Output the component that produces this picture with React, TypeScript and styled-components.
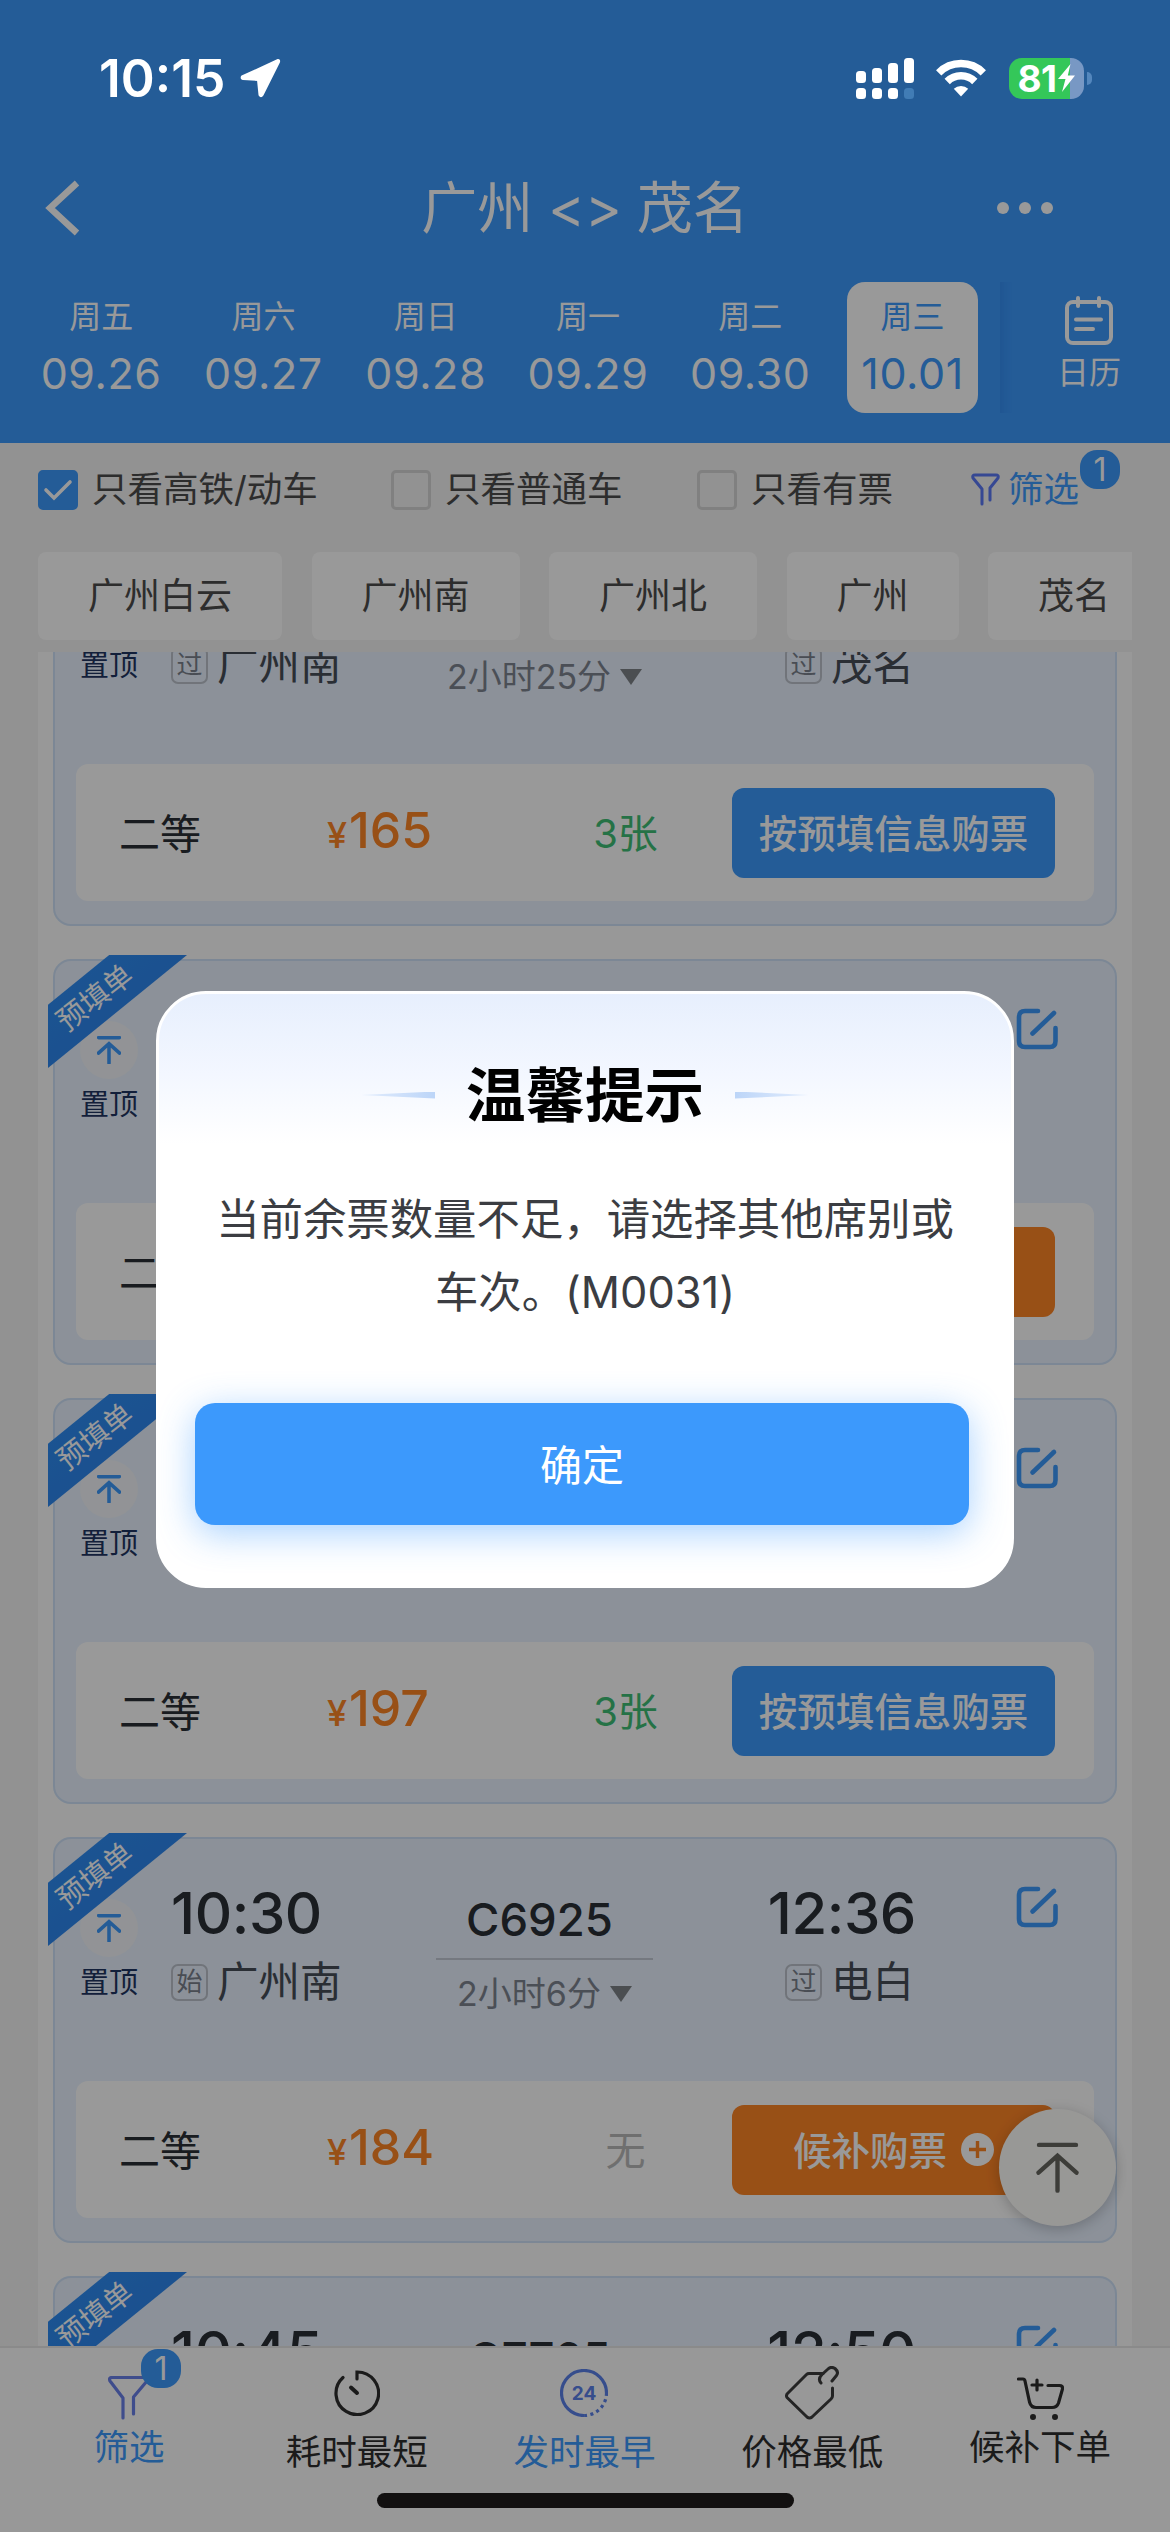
import React from "react";
import styled, { createGlobalStyle, css } from "styled-components";

const GlobalStyle = createGlobalStyle`
  *, *::before, *::after { box-sizing: border-box; }
  body {
    margin: 0;
    font-family: Inter, "Noto Sans CJK SC", sans-serif;
    color: #2b2f36;
  }
`;

const BLUE = "#3c99fc";
const ORANGE = "#fe8526";

const Screen = styled.div`
  position: relative;
  width: 1170px;
  height: 2532px;
  overflow: hidden;
  display: flex;
  flex-direction: column;
  background: #f3f3f3;
  white-space: nowrap;
`;

/* ---------- header ---------- */

const Header = styled.header`
  height: 443px;
  background: ${BLUE};
  color: #fff;
  display: flex;
  flex-direction: column;
  flex: none;
`;

const StatusBar = styled.div`
  position: relative;
  z-index: 20;
  height: 156px;
  flex: none;
  display: flex;
  justify-content: space-between;
  align-items: center;
  padding: 0 78px 0 99px;
  color: #fff;
`;

const StatusGroup = styled.div<{ $gap: number }>`
  display: flex;
  align-items: center;
  gap: ${(p) => p.$gap}px;
`;

const Clock = styled.span`
  font-size: 51.5px;
  font-weight: 600;
  line-height: 60px;
`;

const Battery = styled.div`
  display: flex;
  align-items: center;
  gap: 3px;
  margin-left: 23px;
`;

const BatteryBody = styled.div`
  width: 75px;
  height: 41px;
  border-radius: 13px;
  display: flex;
  align-items: center;
  justify-content: center;
  background: linear-gradient(90deg, #34c759 0 61px, #7898c4 61px);
  font-size: 37px;
  font-weight: 700;
  letter-spacing: -0.5px;
`;

const BatteryCap = styled.div`
  width: 5px;
  height: 13px;
  border-radius: 0 6px 6px 0;
  background: #5487bd;
`;

const TitleBar = styled.div`
  height: 104px;
  display: grid;
  grid-template-columns: 173px 1fr 173px;
  align-items: center;
`;

const BackSlot = styled.div`
  padding-left: 44px;
  display: flex;
`;

const Title = styled.h1`
  margin: 0;
  font-size: 56px;
  font-weight: 400;
  line-height: 80px;
  text-align: center;
  word-spacing: -1px;
`;

const MenuDots = styled.div`
  display: flex;
  gap: 10px;
`;

const Dot = styled.i`
  width: 12px;
  height: 12px;
  border-radius: 50%;
  background: #fff;
`;

const DateStrip = styled.div`
  display: flex;
  padding: 22px 0 0 20px;
`;

const DateCell = styled.div<{ $active?: boolean }>`
  width: 131px;
  height: 131px;
  margin: 0 ${31.3 / 2}px;
  border-radius: 18px;
  display: flex;
  flex-direction: column;
  align-items: center;
  padding-top: 15px;
  ${(p) =>
    p.$active &&
    css`
      background: #fff;
      color: ${BLUE};
    `}
`;

const DateList = styled.div`
  display: flex;
  flex: none;
  width: 980px;
`;

const Weekday = styled.span`
  font-size: 32px;
  line-height: 40px;
`;

const DayNumber = styled.span`
  font-size: 43px;
  line-height: 56px;
  margin-top: 8px;
  letter-spacing: 0.6px;
`;

const CalendarButton = styled.div`
  flex: 1;
  box-shadow: inset 12px 0 10px -9px rgba(0, 60, 180, 0.14);
  display: flex;
  flex-direction: column;
  align-items: center;
  padding: 14px 0 0 8px;
  font-size: 32px;
  line-height: 40px;
  gap: 7px;
`;

/* ---------- filters ---------- */

const FilterRow = styled.div`
  height: 94px;
  flex: none;
  display: flex;
  padding-left: 38px;
  align-items: center;
  font-size: 35.5px;
  line-height: 50px;
  color: #4c4c4c;
`;

const CheckItem = styled.label<{ $width: number }>`
  width: ${(p) => p.$width}px;
  flex: none;
  display: flex;
  align-items: center;
  gap: 14px;
`;

const CheckBox = styled.span<{ $checked?: boolean }>`
  width: 40px;
  height: 40px;
  border-radius: 5px;
  flex: none;
  display: flex;
  align-items: center;
  justify-content: center;
  border: 3px solid ${(p) => (p.$checked ? BLUE : "#d6d6d6")};
  background: ${(p) => (p.$checked ? BLUE : "transparent")};
`;

const FilterLink = styled.div`
  position: relative;
  display: flex;
  align-items: center;
  gap: 8px;
  color: ${BLUE};
`;

const Badge = styled.span<{ $left: number; $top: number }>`
  position: absolute;
  left: ${(p) => p.$left}px;
  top: ${(p) => p.$top}px;
  width: 40px;
  height: 39px;
  border-radius: 17px;
  background: ${BLUE};
  color: #fff;
  font-size: 32px;
  line-height: 39px;
  text-align: center;
`;

const ChipRow = styled.div`
  height: 115px;
  flex: none;
  margin: 0 38px;
  padding-top: 15px;
  display: flex;
  align-items: flex-start;
  gap: 29.5px;
  overflow: hidden;
`;

const Chip = styled.div`
  flex: none;
  height: 88px;
  padding: 0 50px;
  border-radius: 8px;
  background: #fff;
  font-size: 36px;
  line-height: 88px;
  color: #4c4c4c;
`;

/* ---------- list ---------- */

const List = styled.main`
  height: 1694px;
  flex: none;
  margin: 0 38px;
  padding: 0 15px;
  background: #fefefe;
  overflow: hidden;
`;

const Card = styled.article`
  position: relative;
  width: 1064px;
  height: 406px;
  margin-bottom: 33px;
  border: 2px solid #cfe2f8;
  border-radius: 18px;
  background: #e9f2ff;
  padding: 0 21px 0 0;
  &:first-child {
    margin-top: -132px;
  }
`;

const CardTop = styled.div`
  height: 242px;
  display: grid;
  grid-template-columns: 108px 273px 217px 261px 1fr;
`;

const PinColumn = styled.div`
  display: flex;
  flex-direction: column;
  align-items: center;
  padding-top: 60px;
  font-size: 29px;
  line-height: 40px;
  color: #1f3562;
`;

const PinCircle = styled.span`
  width: 58px;
  height: 58px;
  border-radius: 50%;
  background: #f3f6fa;
  display: flex;
  align-items: center;
  justify-content: center;
  margin-bottom: 6px;
`;

const Stop = styled.div<{ $end?: boolean }>`
  display: flex;
  flex-direction: column;
  align-items: ${(p) => (p.$end ? "flex-end" : "flex-start")};
  padding: 39px 0 0 ${(p) => (p.$end ? 0 : 8)}px;
`;

const Time = styled.span`
  font-size: 58px;
  font-weight: 500;
  line-height: 70px;
  letter-spacing: -0.4px;
  margin-right: -2px;
`;

const Station = styled.div`
  margin-top: 12px;
  height: 44px;
  display: flex;
  align-items: center;
  gap: 9px;
  font-size: 41.5px;
  line-height: 44px;
  color: #474d58;
`;

const StopKind = styled.span`
  width: 37px;
  height: 37px;
  border: 2px solid #bcc2cc;
  border-radius: 7px;
  font-size: 26px;
  line-height: 31px;
  text-align: center;
  color: #7a818c;
`;

const Middle = styled.div`
  display: flex;
  flex-direction: column;
  align-items: center;
  padding-top: 54px;
`;

const TrainNo = styled.span`
  font-size: 45.5px;
  font-weight: 450;
  line-height: 54px;
  margin-right: 10px;
`;

const Duration = styled.div`
  align-self: stretch;
  margin-top: 11px;
  border-top: 2px solid #c3cad6;
  padding-top: 12px;
  display: flex;
  align-items: center;
  justify-content: center;
  gap: 9px;
  font-size: 34px;
  line-height: 44px;
  color: #7e848f;
`;

const Caret = styled.i`
  border: 11px solid transparent;
  border-top: 16px solid #7e8388;
  border-bottom: 0;
`;

const EditSlot = styled.div`
  padding: 47px 0 0 102px;
`;

const SeatPanel = styled.div`
  margin-left: 21px;
  height: 137px;
  border-radius: 12px;
  background: #fff;
  display: grid;
  grid-template-columns: 251px 210px 195px 323px;
  align-items: center;
`;

const SeatClass = styled.span`
  padding: 0 0 4px 43px;
  font-size: 41px;
`;

const Price = styled.span`
  display: flex;
  align-items: baseline;
  gap: 2px;
  color: ${ORANGE};
  font-size: 50px;
  font-weight: 500;
  line-height: 60px;
  small {
    font-size: 36px;
  }
`;

const Remain = styled.span<{ $none?: boolean }>`
  font-size: 40px;
  text-align: center;
  margin-left: -18px;
  padding-bottom: 3px;
  color: ${(p) => (p.$none ? "#b9b9b9" : "#3fbf76")};
`;

const BuyButton = styled.button<{ $waitlist?: boolean }>`
  width: 323px;
  height: 90px;
  border: 0;
  border-radius: 12px;
  padding: 0 0 4px;
  background: ${(p) => (p.$waitlist ? ORANGE : BLUE)};
  color: #fff;
  font: 500 38.5px Inter, "Noto Sans CJK SC", sans-serif;
  display: flex;
  align-items: center;
  justify-content: center;
  gap: 14px;
  svg {
    margin-top: 4px;
  }
`;

const Ribbon = styled.div`
  position: absolute;
  left: -7px;
  top: -6px;
  width: 139px;
  height: 113px;
  clip-path: polygon(0 44%, 44% 0, 100% 0, 0 100%);
  background: linear-gradient(141deg, #2f8ff5, #2b7fea);
  z-index: 1;
`;

const RibbonText = styled.span`
  position: absolute;
  left: -3px;
  top: 23px;
  width: 100px;
  font-size: 29px;
  line-height: 40px;
  text-align: center;
  color: #fff;
  transform: rotate(-38deg);
`;

const ToTop = styled.div`
  position: absolute;
  left: 999px;
  top: 2109px;
  width: 117px;
  height: 117px;
  border-radius: 50%;
  background: #fdfdfb;
  box-shadow: 0 3px 14px rgba(0, 0, 0, 0.22);
  display: flex;
  align-items: center;
  justify-content: center;
`;

/* ---------- tab bar ---------- */

const TabBar = styled.nav`
  position: relative;
  height: 186px;
  flex: none;
  background: #fefefe;
  border-top: 2px solid #e7e7e7;
  display: flex;
  flex-direction: column;
  align-items: center;
`;

const Tabs = styled.div`
  width: 1170px;
  height: 145px;
  padding: 0 16px 0 15px;
  display: grid;
  grid-template-columns: repeat(5, 1fr);
`;

const Tab = styled.div<{ $active?: boolean; $raised?: boolean }>`
  position: relative;
  display: flex;
  flex-direction: column;
  align-items: center;
  padding-top: 18px;
  gap: ${(p) => (p.$raised ? 6 : 11)}px;
  font-size: 35.5px;
  line-height: 44px;
  color: ${(p) => (p.$active ? BLUE : "#2e2e2e")};
`;

const TabIcon = styled.span<{ $raised?: boolean }>`
  height: 54px;
  padding-top: ${(p) => (p.$raised ? 9 : 0)}px;
  display: flex;
  align-items: center;
`;

const HomeIndicator = styled.div`
  width: 417px;
  height: 15px;
  border-radius: 8px;
  background: #1f1b1b;
`;

/* ---------- dialog ---------- */

const Scrim = styled.div`
  position: absolute;
  inset: 0;
  z-index: 10;
  background: rgba(0, 0, 0, 0.4);
  padding: 991px 156px 0;
`;

const Dialog = styled.section`
  width: 858px;
  height: 597px;
  border-radius: 50px;
  border: 3px solid #fff;
  background: linear-gradient(180deg, #e7effd 0, #f3f7ff 80px, #fff 150px);
  display: flex;
  flex-direction: column;
  align-items: center;
`;

const DialogHead = styled.div`
  margin-top: 59px;
  height: 84px;
  display: flex;
  align-items: center;
  gap: 31px;
  color: #000;
`;

const DialogTitle = styled.h2`
  margin: 0;
  font-size: 59.5px;
  font-weight: 700;
  line-height: 84px;
`;

const Taper = styled.i<{ $flip?: boolean }>`
  width: 74px;
  height: 7px;
  background: linear-gradient(90deg, #e3edfd, #bcd5f8);
  clip-path: polygon(0 50%, 100% 0, 100% 100%);
  transform: ${(p) => (p.$flip ? "scaleX(-1)" : "none")};
`;

const DialogText = styled.p`
  margin: 46px 0 0;
  font-size: 43.4px;
  line-height: 73px;
  text-align: center;
  color: #3b3d42;
`;

const ConfirmButton = styled.button`
  width: 774px;
  height: 122px;
  margin: 74px 6px 0 0;
  padding: 0 0 4px;
  border: 0;
  border-radius: 20px;
  background: ${BLUE};
  box-shadow: 0 8px 36px rgba(60, 153, 252, 0.45);
  color: #fff;
  font: 400 42px Inter, "Noto Sans CJK SC", sans-serif;
`;

/* ---------- icons ---------- */

const LocationArrow = () => (
  <svg width="42" height="40" viewBox="0 0 42 40">
    <path d="M39 2 L3 18.500 Q2 20.500 4 21 L19 22 L20.500 37 Q22 39.500 23.500 37 L40 4 Q40.500 2 39 2 Z" fill="#fff" stroke="#fff" strokeWidth="2" strokeLinejoin="round" />
  </svg>
);

const Signal = () => (
  <svg width="58" height="41" viewBox="0 0 58 41" fill="#fff">
    <rect x="0" y="13" width="10" height="12" rx="3.500" />
    <rect x="16" y="10" width="10" height="15" rx="3.500" />
    <rect x="32" y="5" width="10" height="20" rx="3.500" />
    <rect x="48" y="0" width="10" height="25" rx="3.500" />
    <rect x="0" y="30" width="10" height="11" rx="3.500" />
    <rect x="16" y="30" width="10" height="11" rx="3.500" />
    <rect x="32" y="30" width="10" height="11" rx="3.500" />
    <rect x="48" y="30" width="10" height="11" rx="3.500" fill="#417cb5" />
  </svg>
);

const Wifi = () => (
  <svg width="50" height="38" viewBox="0 0 50 38" fill="none" stroke="#fff" strokeWidth="7.500">
    <path d="M2.700 13.800 A31.500 31.500 0 0 1 47.300 13.800" />
    <path d="M11.200 22.500 A19.500 19.500 0 0 1 38.800 22.500" />
    <path d="M25 37.500 L17.800 29.800 A10.500 10.500 0 0 1 32.200 29.800 Z" fill="#fff" stroke="none" />
  </svg>
);

const Bolt = () => (
  <svg width="19" height="30" viewBox="0 0 19 30">
    <path d="M13.500 1 L1 16 H8.500 L5 29 L18 12.500 H10.800 Z" fill="#fff" />
  </svg>
);

const Chevron = () => (
  <svg width="38" height="56" viewBox="0 0 38 56" fill="none" stroke="#fff" strokeWidth="6.500">
    <path d="M33 3 L6 28 L33 53" />
  </svg>
);

const Calendar = () => (
  <svg width="50" height="50" viewBox="0 0 50 50" fill="none" stroke="#fff" strokeWidth="4" strokeLinecap="round">
    <rect x="3" y="6" width="44" height="41" rx="6" />
    <path d="M14 2 V10 M35 2 V10 M12 23.500 H37 M12 33 H29" />
  </svg>
);

const SmallFunnel = () => (
  <svg width="29" height="34" viewBox="0 0 29 34" fill="none" stroke="#5a78f5" strokeWidth="3" strokeLinecap="round" strokeLinejoin="round">
    <path d="M11 31 V16 L2 5 Q1 2 4 2 H25 Q28 2 27 5 L19 15 V27" />
  </svg>
);

const Tick = () => (
  <svg width="30" height="24" viewBox="0 0 30 24" fill="none" stroke="#fff" strokeWidth="3.600" strokeLinecap="round">
    <path d="M3 12 L11 20 L27 4" />
  </svg>
);

const ArrowTop = ({ size, color, weight }: { size: number; color: string; weight: number }) => (
  <svg width={size} height={size * 1.2} viewBox="0 0 44 53" fill="none" stroke={color} strokeWidth={weight} strokeLinecap="round">
    <path d="M3 3 H41 M22 15 V50 M2.500 31.500 L22 14 L41.500 31.500" />
  </svg>
);

const EditIcon = () => (
  <svg width="42" height="42" viewBox="0 0 42 42" fill="none" stroke={BLUE} strokeWidth="4.600" strokeLinecap="round">
    <path d="M22 3 H9 Q3 3 3 9 V33 Q3 39 9 39 H34 Q39.500 39 39.500 33 V20" />
    <path d="M16.500 25.500 L38 5" />
  </svg>
);

const PlusDisc = () => (
  <svg width="33" height="33" viewBox="0 0 33 33">
    <circle cx="16.500" cy="16.500" r="16.500" fill="#fff" />
    <path d="M8 16.500 H25 M16.500 8 V25" stroke={ORANGE} strokeWidth="3.400" />
  </svg>
);

const Funnel = () => (
  <svg width="44" height="44" viewBox="0 0 44 44" fill="none" stroke="#6a80ea" strokeWidth="3.200" strokeLinecap="round" strokeLinejoin="round">
    <path d="M16 42 V22 L3 5 Q1.500 1.500 5 1.500 H38 Q41.500 1.500 40 5 L26.500 21 V38" />
  </svg>
);

const TimerIcon = () => (
  <svg width="46" height="46" viewBox="0 0 46 46" fill="none" stroke="#2e2e2e" strokeWidth="3.200" strokeLinecap="round">
    <path d="M23 9 V2 A21.300 21.300 0 1 1 9 7.500" />
    <path d="M17 17.500 L23 23" strokeWidth="4" />
  </svg>
);

const ClockText = styled.text`
  font: 700 19px Inter, sans-serif;
`;

const Hours24 = () => (
  <svg width="48" height="48" viewBox="0 0 48 48" fill="none" stroke="#5a80ea" strokeWidth="3.200">
    <path d="M46.500 24 A22.500 22.500 0 1 0 24 46.500" />
    <path d="M46.500 24 A22.500 22.500 0 0 1 24 46.500" strokeDasharray="3 3.400" />
    <ClockText x="24" y="31" textAnchor="middle" fill="#5a80ea" stroke="none">24</ClockText>
  </svg>
);

const TagIcon = () => (
  <svg width="54" height="54" viewBox="0 0 54 54" fill="none" stroke="#3c3c3c" strokeWidth="3" strokeLinecap="round" strokeLinejoin="round">
    <path d="M38 7.500 H24 Q22.500 7.500 21.500 8.500 L2 28 Q1 30 2 31.500 L22 51 Q24.500 53 27 51 L46 33 Q47.500 31.500 47.500 30 V22" />
    <path d="M36 17 Q32.500 13 37 8.500 L43 3 Q46 0 50 2.500 Q54 6 51.500 9.500 L47 15" />
  </svg>
);

const CartIcon = () => (
  <svg width="47" height="44" viewBox="0 0 47 44" fill="none" stroke="#2e2e2e" strokeWidth="3.200" strokeLinecap="round" strokeLinejoin="round">
    <path d="M1.500 3 H6 Q7.500 3 8 5 L12.500 26 Q14 31.500 19 31.500 H35 Q40 31.500 41.500 27 L45.500 13 Q46 9.500 42.500 9.500 H31" />
    <path d="M20 4 V14 M15 9 H25" />
    <circle cx="16" cy="41" r="2" fill="#2e2e2e" strokeWidth="2" />
    <circle cx="38" cy="41" r="2" fill="#2e2e2e" strokeWidth="2" />
  </svg>
);

/* ---------- data ---------- */

const dates = [
  ["周五", "09.26"],
  ["周六", "09.27"],
  ["周日", "09.28"],
  ["周一", "09.29"],
  ["周二", "09.30"],
  ["周三", "10.01"],
];

const stations = ["广州白云", "广州南", "广州北", "广州", "茂名"];

type Train = {
  depart?: string;
  arrive?: string;
  no?: string;
  kind?: string;
  from?: string;
  to?: string;
  duration?: string;
  price?: string;
  left?: number;
  ribbon?: boolean;
  details?: boolean;
};

const trains: Train[] = [
  { kind: "过", from: "广州南", to: "茂名", duration: "2小时25分", price: "165", left: 3, details: true },
  { ribbon: true, details: true },
  { price: "197", left: 3, ribbon: true, details: true },
  { depart: "10:30", arrive: "12:36", no: "C6925", kind: "始", from: "广州南", to: "电白", duration: "2小时6分", price: "184", ribbon: true, details: true },
  { depart: "10:45", arrive: "12:50", no: "C7765", ribbon: true },
];

const StationLine = ({ kind, name }: { kind?: string; name?: string }) => (
  <Station>
    {name && <StopKind>{kind}</StopKind>}
    {name}
  </Station>
);

const Seat = ({ t }: { t: Train }) => (
  <SeatPanel>
    <SeatClass>二等</SeatClass>
    <Price>
      {t.price && (
        <>
          <small>¥</small>
          {t.price}
        </>
      )}
    </Price>
    <Remain $none={!t.left}>{t.left ? `${t.left}张` : t.price && "无"}</Remain>
    {t.left ? (
      <BuyButton>按预填信息购票</BuyButton>
    ) : (
      <BuyButton $waitlist>
        {t.price && (
          <>
            候补购票
            <PlusDisc />
          </>
        )}
      </BuyButton>
    )}
  </SeatPanel>
);

const TrainCard = ({ t }: { t: Train }) => (
  <Card>
    {t.ribbon && (
      <Ribbon>
        <RibbonText>预填单</RibbonText>
      </Ribbon>
    )}
    <CardTop>
      <PinColumn>
        {t.details && (
          <>
            <PinCircle>
              <ArrowTop size={24} color={BLUE} weight={6.5} />
            </PinCircle>
            置顶
          </>
        )}
      </PinColumn>
      <Stop>
        <Time>{t.depart || "\u00a0"}</Time>
        <StationLine kind={t.kind} name={t.from} />
      </Stop>
      <Middle>
        <TrainNo>{t.no || "\u00a0"}</TrainNo>
        {t.duration && (
          <Duration>
            {t.duration}
            <Caret />
          </Duration>
        )}
      </Middle>
      <Stop $end>
        <Time>{t.arrive || "\u00a0"}</Time>
        <StationLine kind="过" name={t.to} />
      </Stop>
      <EditSlot>
        <EditIcon />
      </EditSlot>
    </CardTop>
    {t.details && <Seat t={t} />}
  </Card>
);

export default function App() {
  return (
    <Screen>
      <GlobalStyle />
      <Header>
        <StatusBar>
          <StatusGroup $gap={14}>
            <Clock>10:15</Clock>
            <LocationArrow />
          </StatusGroup>
          <StatusGroup $gap={0}>
            <StatusGroup $gap={22}>
              <Signal />
              <Wifi />
            </StatusGroup>
            <Battery>
              <BatteryBody>
                81
                <Bolt />
              </BatteryBody>
              <BatteryCap />
            </Battery>
          </StatusGroup>
        </StatusBar>
        <TitleBar>
          <BackSlot>
            <Chevron />
          </BackSlot>
          <Title>广州 &lt;&gt; 茂名</Title>
          <MenuDots>
            <Dot />
            <Dot />
            <Dot />
          </MenuDots>
        </TitleBar>
        <DateStrip>
          <DateList>
            {dates.map(([day, date], i) => (
              <DateCell key={date} $active={i === 5}>
                <Weekday>{day}</Weekday>
                <DayNumber>{date}</DayNumber>
              </DateCell>
            ))}
          </DateList>
          <CalendarButton>
            <Calendar />
            日历
          </CalendarButton>
        </DateStrip>
      </Header>

      <FilterRow>
        <CheckItem $width={353}>
          <CheckBox $checked>
            <Tick />
          </CheckBox>
          只看高铁/动车
        </CheckItem>
        <CheckItem $width={306}>
          <CheckBox />
          只看普通车
        </CheckItem>
        <CheckItem $width={274}>
          <CheckBox />
          只看有票
        </CheckItem>
        <FilterLink>
          <SmallFunnel />
          筛选
          <Badge $left={109} $top={-15}>1</Badge>
        </FilterLink>
      </FilterRow>

      <ChipRow>
        {stations.map((s) => (
          <Chip key={s}>{s}</Chip>
        ))}
      </ChipRow>

      <List>
        {trains.map((t, i) => (
          <TrainCard key={i} t={t} />
        ))}
      </List>

      <TabBar>
        <Tabs>
          <Tab $active $raised>
            <TabIcon $raised>
              <Funnel />
            </TabIcon>
            筛选
            <Badge $left={126} $top={1}>1</Badge>
          </Tab>
          <Tab>
            <TabIcon>
              <TimerIcon />
            </TabIcon>
            耗时最短
          </Tab>
          <Tab $active>
            <TabIcon>
              <Hours24 />
            </TabIcon>
            发时最早
          </Tab>
          <Tab>
            <TabIcon>
              <TagIcon />
            </TabIcon>
            价格最低
          </Tab>
          <Tab $raised>
            <TabIcon $raised>
              <CartIcon />
            </TabIcon>
            候补下单
          </Tab>
        </Tabs>
        <HomeIndicator />
      </TabBar>

      <ToTop>
        <ArrowTop size={43} color="#66665f" weight={4.5} />
      </ToTop>

      <Scrim>
        <Dialog>
          <DialogHead>
            <Taper />
            <DialogTitle>温馨提示</DialogTitle>
            <Taper $flip />
          </DialogHead>
          <DialogText>
            当前余票数量不足，请选择其他席别或
            <br />
            车次。(M0031)
          </DialogText>
          <ConfirmButton>确定</ConfirmButton>
        </Dialog>
      </Scrim>
    </Screen>
  );
}
